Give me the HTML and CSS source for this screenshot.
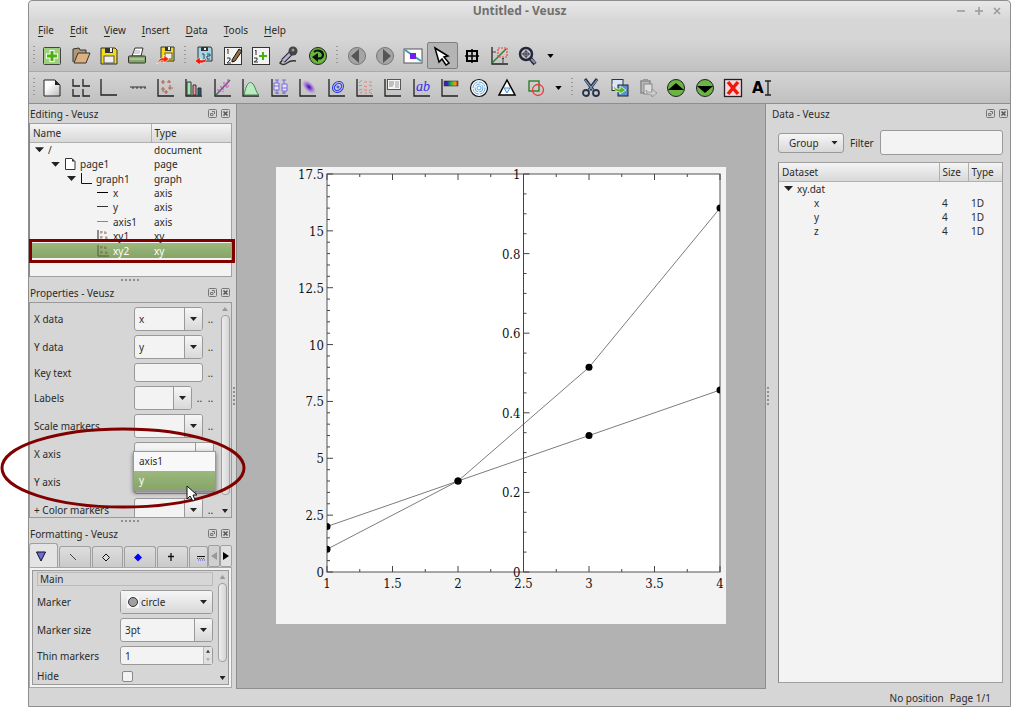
FILE: index.html
```html
<!DOCTYPE html>
<html lang="en">
<head>
  <meta charset="UTF-8" />
  <meta name="viewport" content="width=device-width, initial-scale=1" />
  <title>Untitled - Veusz</title>
  <link rel="stylesheet" href="styles.css">
</head>
<body>
  <div class="window">
    <header class="titlebar">
      <h1>Untitled - Veusz</h1>
      <div class="window-buttons">
        <button aria-label="Minimize"><svg viewBox="0 0 8 8"><path d="M0 4H8"/></svg></button>
        <button aria-label="Maximize"><svg viewBox="0 0 8 8"><path d="M0 4H8M4 0V8"/></svg></button>
        <button aria-label="Close"><svg viewBox="0 0 8 8"><path d="M1 1L7 7M7 1L1 7"/></svg></button>
      </div>
    </header>

    <nav class="menubar">
      <button><u>F</u>ile</button>
      <button><u>E</u>dit</button>
      <button><u>V</u>iew</button>
      <button><u>I</u>nsert</button>
      <button><u>D</u>ata</button>
      <button><u>T</u>ools</button>
      <button><u>H</u>elp</button>
    </nav>

    <!-- File, data and view tools -->
    <div class="toolbar">
      <span class="grip"></span>
      <div class="tools five">
        <button aria-label="New"><svg viewBox="0 0 20 20"><rect x="1.5" y="1.5" width="17" height="17" rx="1" fill="#9fd080" stroke="#444"/><path d="M10 4V16M4 10H16" stroke="#fff" stroke-width="5"/><path d="M10 5V15M5 10H15" stroke="#4caf10" stroke-width="3"/></svg></button>
        <button aria-label="Open"><svg viewBox="0 0 20 20"><path d="M2 16V3L8 2L9 4H15V8" fill="#b09878" stroke="#333"/><path d="M3 17L7 7H19L15 17Z" fill="#deb080" stroke="#333"/></svg></button>
        <button aria-label="Save"><svg viewBox="0 0 20 20"><path d="M2 2H16L18 4V18H2Z" fill="#f2dc1c" stroke="#333"/><rect x="6" y="2" width="8" height="5" fill="#333"/><rect x="11" y="2" width="2" height="4" fill="#eee"/><rect x="5" y="10" width="10" height="7" fill="#eee" stroke="#555"/></svg></button>
        <button aria-label="Print"><svg viewBox="0 0 20 20"><path d="M5 10L8 2H16L14 10Z" fill="#fff" stroke="#333"/><path d="M8 5H13M7 7H13" stroke="#aaa"/><rect x="1.500" y="10" width="17" height="7" rx="1" fill="#86a968" stroke="#333"/><path d="M3 13H17" stroke="#cde0b8"/></svg></button>
        <button aria-label="Export"><svg viewBox="0 0 20 20"><path d="M5 1H18V15H5Z" fill="#f2dc1c" stroke="#333"/><rect x="9" y="1" width="6" height="4" fill="#333"/><rect x="12" y="1" width="2" height="3" fill="#eee"/><rect x="9" y="7" width="7" height="6" fill="#eee" stroke="#555"/><path d="M1 18C2 13 6 11 8 12V9L13 13L8 17V15C5 14 3 15 1 18Z" fill="#f22808" stroke="#fff" stroke-width=".6"/></svg></button>
      </div>
      <span class="grip"></span>
      <div class="tools five">
        <button aria-label="Import data"><svg viewBox="0 0 20 20"><path d="M4 1H17L18 3V15H4Z" fill="#a4d7e6" stroke="#333"/><path d="M7 1V5H14V1" fill="#333"/><path d="M11 2V4" stroke="#eee" stroke-width="2"/><path d="M8 8H10V13M13 8H16V10H13V13H16" fill="none" stroke="#345"/><path d="M1 15L6 11V14C9 14 11 14 12 12C13 16 10 17 6 17V19Z" fill="#f01808" stroke="#fff" stroke-width=".5"/></svg></button>
        <button aria-label="Edit data"><svg viewBox="0 0 20 20"><rect x="1.500" y="1.500" width="17" height="17" fill="#f3f3f3" stroke="#333"/><path d="M4 4L5 3V8M4 12H7V14L4 17H8" fill="none" stroke="#333"/><path d="M9 14L16 3L19 5L12 15L9 16Z" fill="#987040" stroke="#111"/></svg></button>
        <button aria-label="Create data"><svg viewBox="0 0 20 20"><rect x="1.500" y="1.500" width="17" height="17" fill="#f3f3f3" stroke="#333"/><path d="M4 5L5 4V9M3 12H6V14L3 16H7" fill="none" stroke="#333"/><path d="M12 6V14M8 10H16" stroke="#4caf10" stroke-width="2"/></svg></button>
        <button aria-label="Capture data"><svg viewBox="0 0 20 20"><path d="M6 11L1 17Q4 20 8 17T17 15" fill="none" stroke="#333" stroke-width="1.500"/><path d="M4 15L12 7" stroke="#222" stroke-width="5"/><path d="M4 15L12 7" stroke="#b8b0d8" stroke-width="3"/><circle cx="14" cy="5" r="4.500" fill="#444"/><circle cx="14" cy="4" r="1.500" fill="#999"/></svg></button>
        <button aria-label="Reload"><svg viewBox="0 0 20 20"><circle cx="10" cy="10" r="8.500" fill="#68b83c" stroke="#222"/><path d="M6 6C9 3 15 5 15 9C15 12 12 13 10 12" fill="none" stroke="#111" stroke-width="2.200"/><path d="M4 11L10 7V16Z" fill="#111"/></svg></button>
      </div>
      <span class="grip"></span>
      <div class="tools seven-view">
        <button aria-label="Previous page"><svg viewBox="0 0 20 20"><circle cx="10" cy="10" r="8.500" fill="#a5a5a5" stroke="#777"/><path d="M4 10L12 3V17Z" fill="#555"/></svg></button>
        <button aria-label="Next page"><svg viewBox="0 0 20 20"><circle cx="10" cy="10" r="8.500" fill="#a5a5a5" stroke="#777"/><path d="M16 10L8 3V17Z" fill="#555"/></svg></button>
        <button aria-label="Full screen"><svg viewBox="0 0 20 20"><rect x="1" y="3" width="18" height="14" fill="#fff" stroke="#555"/><path d="M2 4L18 15" stroke="#389cb8" stroke-width="2"/><rect x="7" y="7" width="6" height="6" fill="#7020e8"/></svg></button>
        <button class="pressed" aria-label="Select"><svg viewBox="0 0 20 20"><path d="M3 2L16 10L12 11L17 17L14 19L10 13L7 16Z" fill="#fff" stroke="#000" stroke-width="1.500"/></svg></button>
        <button aria-label="Read data"><svg viewBox="0 0 20 20"><rect x="5" y="5" width="10" height="10" fill="#ccc" stroke="#000" stroke-width="2"/><path d="M10 3V17M3 10H17" stroke="#000" stroke-width="1.500"/></svg></button>
        <button aria-label="Zoom graph"><svg viewBox="0 0 20 20"><path class="axes" d="M2 1V18H18"/><path d="M2 17L16 3" stroke="#28803c" stroke-width="1.500"/><path d="M8 2H17V11H8Z" fill="none" stroke="#f04830" stroke-width="1.200" stroke-dasharray="2 1"/><path d="M2 6H6M13 12V17M12 13L13 12L14 13" fill="none" stroke="#444"/></svg></button>
        <button aria-label="Zoom"><svg viewBox="0 0 20 20"><path d="M12 12L17 18" stroke="#222" stroke-width="4"/><path d="M13 13L17 17" stroke="#8890c8" stroke-width="2"/><circle cx="8" cy="8" r="6" fill="#ccc" stroke="#26263c" stroke-width="2.500"/><path d="M8 4V12M4 8H12" stroke="#333"/><circle cx="8" cy="8" r="2.500" fill="none" stroke="#446"/></svg></button>
      </div>
      <button class="more" aria-label="More zoom options"><svg viewBox="0 0 8 5"><path d="M0 0H8L4 5Z"/></svg></button>
    </div>

    <!-- Widget and edit tools -->
    <div class="toolbar">
      <span class="grip"></span>
      <div class="tools insert">
        <button aria-label="Page"><svg viewBox="0 0 20 20"><defs><linearGradient id="paper" x2="1" y2="1"><stop offset=".3" stop-color="#fff"/><stop offset="1" stop-color="#bbb"/></linearGradient></defs><path d="M2 2H13L18 7V18H2Z" fill="url(#paper)" stroke="#222"/><path d="M13 2V7H18Z" fill="#222"/></svg></button>
        <button aria-label="Grid"><svg viewBox="0 0 20 20"><path class="axes" d="M2 1V8H9M12 1V8H19M2 11V18H9M12 11V18H19"/></svg></button>
        <button aria-label="Graph"><svg viewBox="0 0 20 20"><path class="axes" d="M2 1V17H18"/></svg></button>
        <button aria-label="Axis"><svg viewBox="0 0 20 20"><path d="M2 9H18M5 9V11M9 9V11M13 9V11M17 9V11" stroke="#333"/></svg></button>
        <button aria-label="XY"><svg viewBox="0 0 20 20"><path class="axes" d="M2 1V18H18"/><path d="M7 2V6M5 4H9M13 2V5M11 4H15M7 9V14M5 11H9M14 7V12M12 10H17M10 12V16M8 14H12" stroke="#b06a50" stroke-width="1.200"/></svg></button>
        <button aria-label="Bar"><svg viewBox="0 0 20 20"><path class="axes" d="M2 1V18H18"/><path d="M3 4H7V17H3Z" fill="#a4e8b0" stroke="#333"/><path d="M9 7H12V17H9Z" fill="#f09898" stroke="#333"/><path d="M14 10H17V17H14Z" fill="#106080" stroke="#333"/></svg></button>
        <button aria-label="Fit"><svg viewBox="0 0 20 20"><path class="axes" d="M2 1V18H18"/><path d="M3 17L17 2" stroke="#308040" stroke-width="1.500"/><path d="M5 11V15M8 8V12M11 4V9M14 5V10M10 10V14M15 1V5M6 13H9M12 8H16" stroke="#e030e0" stroke-dasharray="2 1"/></svg></button>
        <button aria-label="Function"><svg viewBox="0 0 20 20"><path class="axes" d="M2 1V18H18"/><path d="M3 17C6 3 9 4 11 5C14 7 15 15 18 17Z" fill="#b8ecc0" stroke="#508058"/></svg></button>
        <button aria-label="Box plot"><svg viewBox="0 0 20 20"><path class="axes" d="M2 1V18H18"/><path d="M7 2V16M14 2V16M5 2H9M12 2H16M5 15H9M12 15H16" stroke="#7868d8"/><path d="M4 5H9V12H4ZM12 6H17V13H12ZM4 8H9M12 10H17" fill="#e8e4ff" stroke="#7868d8"/></svg></button>
        <button aria-label="Image"><svg viewBox="0 0 20 20"><defs><radialGradient id="spot"><stop offset=".1" stop-color="#5018c0"/><stop offset=".6" stop-color="#a070d8" stop-opacity=".7"/><stop offset="1" stop-color="#c8a0e0" stop-opacity="0"/></radialGradient></defs><path class="axes" d="M2 1V18H18"/><ellipse cx="11" cy="9" rx="9" ry="5" transform="rotate(45 11 9)" fill="url(#spot)"/></svg></button>
        <button aria-label="Contour"><svg viewBox="0 0 20 20"><path class="axes" d="M2 1V18H18"/><g fill="none" stroke="#2838f0"><ellipse cx="11" cy="9" rx="6" ry="5" transform="rotate(-45 11 9)"/><ellipse cx="11" cy="9" rx="4" ry="3" transform="rotate(-45 11 9)"/><circle cx="11" cy="9" r="1"/></g></svg></button>
        <button aria-label="Vector field"><svg viewBox="0 0 20 20"><path class="axes" d="M2 1V18H18"/><path d="M4 5L7 2M9 4H12M14 4H17M4 8L7 7M9 8L12 9M14 7L17 8M4 12L7 11M9 12H12M14 13L17 11M5 15L7 14M10 15H12M14 14L17 16" stroke="#e88070"/></svg></button>
        <button aria-label="Key"><svg viewBox="0 0 20 20"><path class="axes" d="M2 1V18H18"/><rect x="4.500" y="1.500" width="13" height="10" fill="#f4f4f4" stroke="#555"/><path d="M6 4H11M6 6H11M6 8H10" stroke="#888"/><path d="M13 3V10M15 3V10" stroke="#99a"/></svg></button>
        <button aria-label="Label"><svg viewBox="0 0 20 20"><path class="axes" d="M2 1V18H18"/><text class="ab" x="4" y="13">ab</text></svg></button>
        <button aria-label="Color bar"><svg viewBox="0 0 20 20"><defs><linearGradient id="rainbow"><stop offset="0" stop-color="#802080"/><stop offset=".2" stop-color="#2020d0"/><stop offset=".5" stop-color="#18c030"/><stop offset=".8" stop-color="#f0a010"/><stop offset="1" stop-color="#e01010"/></linearGradient></defs><path class="axes" d="M2 1V18H18"/><rect x="4" y="3" width="14" height="5" fill="url(#rainbow)" stroke="#222" stroke-width=".5"/></svg></button>
        <button aria-label="Polar"><svg viewBox="0 0 20 20"><circle cx="10" cy="10" r="8.500" fill="#fff" stroke="#111" stroke-width="1.200"/><g fill="none" stroke="#58a8e8"><circle cx="10" cy="10" r="6" stroke-dasharray="8 1"/><circle cx="10" cy="10" r="4" stroke-dasharray="6 1"/><circle cx="10" cy="10" r="2"/></g></svg></button>
        <button aria-label="Ternary"><svg viewBox="0 0 20 20"><path d="M10 2L18 17H2Z" fill="#fff" stroke="#000" stroke-width="1.500"/><path d="M7 10L13 10L10 15Z" fill="#e0f0ff" stroke="#4890e0"/></svg></button>
        <button aria-label="Shape"><svg viewBox="0 0 20 20"><rect x="3" y="3" width="10" height="10" fill="none" stroke="#207820" stroke-width="1.300"/><circle cx="12" cy="12" r="5.500" fill="none" stroke="#f03838" stroke-width="1.300"/></svg></button>
      </div>
      <button class="more" aria-label="More shapes"><svg viewBox="0 0 8 5"><path d="M0 0H8L4 5Z"/></svg></button>
      <span class="grip"></span>
      <div class="tools seven">
        <button aria-label="Cut"><svg viewBox="0 0 20 20"><path d="M4 1L12 12M16 1L8 12" stroke="#26324c" stroke-width="3"/><path d="M4 2L12 12M16 2L8 12" stroke="#8ca0c0" stroke-width="1.200"/><g fill="none" stroke="#26324c" stroke-width="1.800"><ellipse cx="5" cy="15" rx="3" ry="3"/><ellipse cx="15" cy="15" rx="3" ry="3"/></g></svg></button>
        <button aria-label="Copy"><svg viewBox="0 0 20 20"><rect x="2" y="1.500" width="11" height="11" fill="#d8e4f8" stroke="#333"/><rect x="8" y="7" width="10" height="11" fill="#5890d8" stroke="#223"/><path d="M3 6C4 10 7 11 10 11V8L16 12L10 16V14C5 14 3 10 3 6Z" fill="#58b818" stroke="#fff" stroke-width=".7"/></svg></button>
        <button aria-label="Paste" disabled><svg viewBox="0 0 20 20"><path d="M3 3H12V15H3Z" fill="#bbb" stroke="#888" stroke-width="1.500"/><path d="M5 1H10V4H5Z" fill="#999"/><rect x="6" y="6" width="8" height="10" fill="#ddd" stroke="#888"/><path d="M8 12C10 15 12 14 14 14V11L19 15L14 19V17C10 17 8 15 8 12Z" fill="#ccc" stroke="#888" stroke-width=".7"/></svg></button>
        <button aria-label="Move up"><svg viewBox="0 0 20 20"><circle cx="10" cy="10" r="8.500" fill="#6cb444" stroke="#222"/><path d="M2 12L10 5L18 12Z" fill="#000"/></svg></button>
        <button aria-label="Move down"><svg viewBox="0 0 20 20"><circle cx="10" cy="10" r="8.500" fill="#6cb444" stroke="#222"/><path d="M2 8L10 15L18 8Z" fill="#000"/></svg></button>
        <button aria-label="Delete"><svg viewBox="0 0 20 20"><rect x="1.500" y="1.500" width="17" height="17" fill="#f6d8dc" stroke="#222" stroke-width="1.300"/><path d="M5 4L15 16M15 4L5 16" stroke="#f01808" stroke-width="3.500"/></svg></button>
        <button aria-label="Rename"><svg viewBox="0 0 20 20"><text class="rename" x="0" y="15">A</text><path d="M13 3H19M16 3V17M13 17H19" stroke="#222" stroke-width="1.300"/></svg></button>
      </div>
    </div>

    <main class="workspace">
      <aside class="left">
        <section class="dock tree-dock">
          <div class="dock-title">
            <h2>Editing - Veusz</h2>
            <button aria-label="Float"><svg viewBox="0 0 9 9"><rect x=".5" y=".5" width="8" height="8" rx="1"/><path d="M4 2.500H6.500V5M2.500 4.500H5V6.500H2.500Z"/></svg></button>
            <button aria-label="Close"><svg viewBox="0 0 9 9"><rect x=".5" y=".5" width="8" height="8" rx="1"/><path class="cross" d="M2.500 2.500L6.500 6.500M6.500 2.500L2.500 6.500"/></svg></button>
          </div>
          <div class="list tree">
            <table>
              <thead>
                <tr><th class="name">Name</th><th>Type</th></tr>
              </thead>
              <tbody>
                <tr><td><span class="node"><i class="open"></i>/</span></td><td>document</td></tr>
                <tr><td><span class="node level1"><i class="open"></i><svg viewBox="0 0 12 12"><path d="M1.500.5H8L11 3.500V11.500H1.500Z" fill="#fff" stroke="#333"/><path d="M8 .5V3.500H11Z" fill="#333"/></svg>page1</span></td><td>page</td></tr>
                <tr><td><span class="node level2"><i class="open"></i><svg viewBox="0 0 12 12"><path d="M1.500 0V10.500H12" fill="none" stroke="#111"/></svg>graph1</span></td><td>graph</td></tr>
                <tr><td><span class="node level3"><svg viewBox="0 0 12 12"><path d="M0 5.500H11" stroke="#000"/></svg>x</span></td><td>axis</td></tr>
                <tr><td><span class="node level3"><svg viewBox="0 0 12 12"><path d="M0 5.500H11" stroke="#333"/></svg>y</span></td><td>axis</td></tr>
                <tr><td><span class="node level3"><svg viewBox="0 0 12 12"><path d="M0 5.500H11" stroke="#888"/></svg>axis1</span></td><td>axis</td></tr>
                <tr><td><span class="node level3"><svg viewBox="0 0 12 12"><path d="M1 0V11H12" fill="none" stroke="#222"/><path d="M4 1V4M3 2H6M8 1V4M7 3H10M4 6V9M3 7H6M9 6V9M8 8H11" stroke="#987060" stroke-width=".8"/></svg>xy1</span></td><td>xy</td></tr>
                <tr class="selected"><td><span class="node level3"><svg viewBox="0 0 12 12"><path d="M1 0V11H12" fill="none" stroke="#4c5c3c"/><path d="M4 1V4M3 2H6M8 1V4M7 3H10M4 6V9M3 7H6M9 6V9M8 8H11" stroke="#806850" stroke-width=".8"/></svg>xy2</span></td><td>xy</td></tr>
              </tbody>
            </table>
          </div>
          <div class="highlight-box"></div>
        </section>

        <div class="splitter"></div>

        <section class="dock props-dock">
          <div class="dock-title">
            <h2>Properties - Veusz</h2>
            <button aria-label="Float"><svg viewBox="0 0 9 9"><rect x=".5" y=".5" width="8" height="8" rx="1"/><path d="M4 2.500H6.500V5M2.500 4.500H5V6.500H2.500Z"/></svg></button>
            <button aria-label="Close"><svg viewBox="0 0 9 9"><rect x=".5" y=".5" width="8" height="8" rx="1"/><path class="cross" d="M2.500 2.500L6.500 6.500M6.500 2.500L2.500 6.500"/></svg></button>
          </div>
          <div class="scroll-area props">
            <form class="fields">
              <div class="field"><label for="xdata">X data</label><span class="combo"><select id="xdata"><option>x</option></select></span><button type="button" class="dots">..</button></div>
              <div class="field"><label for="ydata">Y data</label><span class="combo"><select id="ydata"><option>y</option></select></span><button type="button" class="dots">..</button></div>
              <div class="field"><label for="key">Key text</label><input type="text" id="key"><button type="button" class="dots">..</button></div>
              <div class="field"><label for="labels">Labels</label><span class="combo"><select id="labels"><option></option></select></span><button type="button" class="dots">..</button><button type="button" class="dots">..</button></div>
              <div class="field"><label for="scale">Scale markers</label><span class="combo"><select id="scale"><option></option></select></span><button type="button" class="dots">..</button></div>
              <div class="field"><label for="xaxis">X axis</label><span class="combo"><select id="xaxis"><option></option></select></span></div>
              <div class="field"><label for="yaxis">Y axis</label><span class="combo"><select id="yaxis"><option></option></select></span></div>
              <div class="field"><label for="color">+ Color markers</label><span class="combo"><select id="color"><option></option></select></span><button type="button" class="dots">..</button></div>
            </form>
            <div class="scrollbar"><i class="up"></i><b></b><i class="down"></i></div>
          </div>
          <ul class="popup">
            <li>axis1</li>
            <li class="selected">y</li>
          </ul>
          <svg class="highlight-oval" viewBox="0 0 248 84"><ellipse cx="124" cy="42" rx="121" ry="39"/></svg>
          <svg class="pointer" viewBox="0 0 12 18"><path d="M1 1V14L4 11L7 16L9 15L7 10H11Z" fill="#fff" stroke="#111"/></svg>
        </section>

        <div class="splitter"></div>

        <section class="dock">
          <div class="dock-title">
            <h2>Formatting - Veusz</h2>
            <button aria-label="Float"><svg viewBox="0 0 9 9"><rect x=".5" y=".5" width="8" height="8" rx="1"/><path d="M4 2.500H6.500V5M2.500 4.500H5V6.500H2.500Z"/></svg></button>
            <button aria-label="Close"><svg viewBox="0 0 9 9"><rect x=".5" y=".5" width="8" height="8" rx="1"/><path class="cross" d="M2.500 2.500L6.500 6.500M6.500 2.500L2.500 6.500"/></svg></button>
          </div>
          <div class="tabs">
            <button class="tab active" aria-label="Main"><svg viewBox="0 0 12 12"><path d="M1.500 2H10.500L6 11Z" fill="#6c6ce0" stroke="#111"/></svg></button>
            <button class="tab" aria-label="Plot line"><svg viewBox="0 0 12 12"><path d="M3 3L9 9" stroke="#444"/></svg></button>
            <button class="tab" aria-label="Marker border"><svg viewBox="0 0 12 12"><path d="M6 3L9.500 6.500L6 10L2.500 6.500Z" fill="#ddd" stroke="#111"/></svg></button>
            <button class="tab" aria-label="Marker fill"><svg viewBox="0 0 12 12"><path d="M6 2.500L10 6.500L6 10.500L2 6.500Z" fill="#0000ff"/></svg></button>
            <button class="tab" aria-label="Error bar line"><svg viewBox="0 0 12 12"><path d="M6 2V10M3 5.500H9" stroke="#111" stroke-width="1.300"/></svg></button>
            <button class="tab" aria-label="Fill below"><svg viewBox="0 0 12 12"><path d="M2 5.500H10" stroke="#111"/><path d="M2 7.500H10M3 9H10" stroke="#4444e0" stroke-dasharray="1 1"/></svg></button>
            <button class="tab-scroll" aria-label="Scroll left" disabled><svg viewBox="0 0 6 8"><path d="M6 0V8L0 4Z"/></svg></button>
            <button class="tab-scroll" aria-label="Scroll right"><svg viewBox="0 0 6 8"><path d="M0 0V8L6 4Z"/></svg></button>
          </div>
          <div class="tab-page">
            <div class="scroll-area">
              <form class="fields formatting">
                <h3>Main</h3>
                <div class="field"><label for="marker">Marker</label><span class="combo picker"><svg viewBox="0 0 12 12"><rect width="12" height="12" fill="#f8f8f8"/><circle cx="6" cy="6" r="4.500" fill="#a0a0a0" stroke="#333"/></svg><select id="marker"><option>circle</option></select></span></div>
                <div class="field"><label for="size">Marker size</label><span class="combo"><select id="size"><option>3pt</option></select></span></div>
                <div class="field"><label for="thin">Thin markers</label><span class="spin"><input type="text" id="thin" value="1"><span class="steps"><i class="up"></i><i class="down off"></i></span></span></div>
                <div class="field"><label for="hide">Hide</label><input type="checkbox" id="hide"></div>
              </form>
              <div class="scrollbar"><i class="up"></i><b></b><i class="down"></i></div>
            </div>
          </div>
        </section>
      </aside>

      <div class="handle"></div>

      <div class="canvas">
        <svg class="plot" id="plot" viewBox="0 0 450 457"></svg>
      </div>

      <div class="handle"></div>

      <aside class="right">
        <section class="dock data-dock">
          <div class="dock-title">
            <h2>Data - Veusz</h2>
            <button aria-label="Float"><svg viewBox="0 0 9 9"><rect x=".5" y=".5" width="8" height="8" rx="1"/><path d="M4 2.500H6.500V5M2.500 4.500H5V6.500H2.500Z"/></svg></button>
            <button aria-label="Close"><svg viewBox="0 0 9 9"><rect x=".5" y=".5" width="8" height="8" rx="1"/><path class="cross" d="M2.500 2.500L6.500 6.500M6.500 2.500L2.500 6.500"/></svg></button>
          </div>
          <div class="filter">
            <button class="group">Group<i class="open"></i></button>
            <label for="filter">Filter</label>
            <input type="text" id="filter">
          </div>
          <div class="list datasets">
            <table>
              <thead>
                <tr><th>Dataset</th><th class="size">Size</th><th class="type">Type</th></tr>
              </thead>
              <tbody>
                <tr><td><span class="node"><i class="open"></i>xy.dat</span></td><td></td><td></td></tr>
                <tr><td><span class="node item">x</span></td><td>4</td><td>1D</td></tr>
                <tr><td><span class="node item">y</span></td><td>4</td><td>1D</td></tr>
                <tr><td><span class="node item">z</span></td><td>4</td><td>1D</td></tr>
              </tbody>
            </table>
          </div>
        </section>
      </aside>
    </main>

    <footer class="statusbar">
      <span>No position</span>
      <span>Page 1/1</span>
    </footer>
  </div>

  <script>
    const plot = document.getElementById('plot');

    // Plot area inside the page
    const left = 51, right = 444, top_ = 7, bottom = 405;

    const xpos = v => left + (v - 1) / 3 * (right - left);
    const ypos = v => bottom - v / 17.5 * (bottom - top_);
    const y2pos = v => bottom - v * (bottom - top_);

    let out = '<clipPath id="area"><rect x="51" y="7" width="393" height="398"/></clipPath>';
    out += '<rect class="area" x="51" y="7" width="393" height="398"/>';

    function line(x1, y1, x2, y2) {
      out += `<line x1="${x1}" y1="${y1}" x2="${x2}" y2="${y2}"/>`;
    }

    function text(x, y, anchor, value) {
      out += `<text x="${x}" y="${y}" text-anchor="${anchor}">${value}</text>`;
    }

    // x axis, mirrored along the top
    for (let i = 0; i <= 12; i++) {
      const x = xpos(1 + i / 4);
      const len = i % 2 ? 3 : 6;
      line(x, bottom, x, bottom - len);
      line(x, top_, x, top_ + len);
      if (i % 2 === 0) text(x, 421, 'middle', 1 + i / 4);
    }

    // y axis
    for (let i = 0; i <= 35; i++) {
      const y = ypos(i / 2);
      line(left, y, left + (i % 5 ? 3 : 6), y);
      if (i % 5 === 0) text(left - 3, y + 5, 'end', i / 2);
    }

    // axis1, in the middle of the graph
    const mid = xpos(2.5);
    line(mid, top_, mid, bottom);
    for (let i = 0; i <= 20; i++) {
      const y = y2pos(i / 20);
      line(mid, y, mid + (i % 4 ? 3 : 6), y);
      if (i % 4 === 0) text(mid - 3, y + 5, 'end', i / 20);
    }

    // data
    const series = [[2, 4, 6, 8], [1, 4, 9, 16]];
    out += '<g clip-path="url(#area)">';
    for (const values of series) {
      const pts = values.map((v, i) => [xpos(i + 1), ypos(v)]);
      out += `<polyline points="${pts.join(' ')}"/>`;
      for (const [x, y] of pts) out += `<circle cx="${x}" cy="${y}" r="3.5"/>`;
    }
    out += '</g>';

    plot.innerHTML = out;
  </script>
</body>
</html>
```
FILE: styles.css
```css
* {
  box-sizing: border-box;
}

body {
  margin: 0;
  padding-left: 28px;
  background: #fff;
  font-family: "Noto Sans", "DejaVu Sans", sans-serif;
  font-size: 10px;
  line-height: 14px;
  color: #2a2a2a;
}

button,
input,
select {
  font: inherit;
  color: inherit;
  margin: 0;
}

button {
  padding: 0;
  border: none;
  background: none;
}

h1, h2, h3 {
  margin: 0;
  font-size: 10px;
  font-weight: normal;
}

svg {
  display: block;
}

.window {
  display: flex;
  flex-direction: column;
  min-height: 100vh;
  border: 1px solid #8e8e8e;
  border-radius: 4px 4px 0 0;
  background: linear-gradient(#e8e8e8, #d6d6d6 20px, #d6d6d6 38px, #c0c0c0 71px, #d6d6d6 71px);
}

/* Title and menu */
.titlebar {
  display: grid;
  grid-template-columns: 1fr auto 1fr;
  align-items: center;
  height: 20px;
}

.titlebar h1 {
  grid-column: 2;
  font-size: 12px;
  font-weight: bold;
  color: #707070;
}

.window-buttons {
  display: flex;
  justify-content: flex-end;
  gap: 10px;
  padding-right: 9px;
}

.window-buttons svg {
  width: 8px;
  height: 8px;
  stroke: #999;
  stroke-width: 1.5;
}

.menubar {
  display: flex;
  gap: 16px;
  height: 18px;
  padding-left: 9px;
}

.menubar u {
  text-underline-offset: 2px;
}

/* Toolbars */
.toolbar {
  display: flex;
  align-items: center;
  height: 33px;
  padding-top: 1px;
  border-bottom: 1px solid #aaa;
}

.toolbar + .toolbar {
  height: 32px;
  padding-top: 0;
  border-bottom-color: #8e8e8e;
  background: linear-gradient(#d4d4d4, #c0c0c0);
}

.grip {
  width: 10px;
  height: 20px;
  background: repeating-linear-gradient(#999 0 1px, transparent 1px 4px) center / 2px 20px no-repeat;
}

.grip:first-child {
  width: 9px;
}

.tools {
  display: flex;
}

.tools button {
  flex: 1;
  display: flex;
  justify-content: center;
  align-items: center;
  height: 27px;
}

.tools svg {
  width: 20px;
  height: 20px;
}

.five {
  width: 142px;
}

.seven,
.seven-view {
  width: 199px;
}

.seven-view {
  margin-left: 1px;
}

.insert {
  width: 512px;
}

.tools .pressed {
  border: 1px solid #808080;
  border-radius: 2px;
  background: #b4b4b4;
}

.axes {
  fill: none;
  stroke: #222;
  stroke-width: 1.3;
}

.ab {
  font: italic 14px "Liberation Serif", serif;
  fill: #3030f0;
}

.rename {
  font: bold 15px "DejaVu Sans", sans-serif;
  fill: #000;
}

.more {
  display: flex;
  justify-content: center;
  width: 17px;
}

.more svg {
  width: 7px;
  height: 4px;
}

/* Main area */
.workspace {
  flex: 1;
  display: flex;
}

.left {
  display: flex;
  flex-direction: column;
  width: 203px;
  padding-bottom: 1px;
}

.right {
  display: flex;
  width: 240px;
}

.handle {
  display: flex;
  align-items: center;
  justify-content: center;
  width: 4px;
}

.handle::before {
  content: "";
  width: 2px;
  height: 20px;
  background: repeating-linear-gradient(#909090 0 2px, transparent 2px 4px);
}

.splitter {
  height: 6px;
  background: repeating-linear-gradient(90deg, #909090 0 2px, transparent 2px 4px) center / 20px 2px no-repeat;
}

.canvas {
  flex: 1;
  display: flex;
  align-items: center;
  justify-content: center;
  padding: 0 1px 2px 0;
  border: 1px solid #8e8e8e;
  border-top: none;
  background: #b2b2b2;
}

/* Docks */
.dock {
  position: relative;
}

.dock-title {
  display: flex;
  align-items: center;
  gap: 4px;
  height: 19px;
  padding: 0 2px 0 1px;
}

.dock-title h2 {
  flex: 1;
}

.dock-title svg {
  width: 9px;
  height: 9px;
  fill: none;
  stroke: #777;
}

.dock-title .cross {
  stroke: #555;
  stroke-width: 1.5;
}

.list {
  flex: 1;
  border: 1px solid #a0a0a0;
  border-left-color: #888;
  background: #f3f3f3;
}

table {
  width: 100%;
  border-collapse: collapse;
  table-layout: fixed;
}

th {
  height: 18px;
  padding: 0 3px;
  border-right: 1px solid #b0b0b0;
  border-bottom: 1px solid #b0b0b0;
  background: linear-gradient(#f4f4f4, #d8d8d8);
  font-weight: normal;
  text-align: left;
}

th:last-child {
  border-right: none;
}

td {
  padding: 0 3px;
}

.tree-dock {
  flex: 1;
  display: flex;
  flex-direction: column;
  z-index: 1;
}

.tree table {
  height: 134px;
}

.tree .name {
  width: 121px;
}

.node {
  display: flex;
  align-items: center;
  gap: 4px;
  padding-left: 2px;
}

.node svg {
  width: 12px;
  height: 12px;
}

.level1 {
  padding-left: 18px;
}

.level2 {
  padding-left: 34px;
}

.level3 {
  padding-left: 64px;
}

.open {
  width: 9px;
  height: 5px;
  background: #222;
  clip-path: polygon(0 0, 100% 0, 50% 100%);
}

.selected {
  background: linear-gradient(#9cb87e, #86a566);
  color: #fff;
}

.highlight-box {
  position: absolute;
  top: 135px;
  left: 0;
  width: 206px;
  height: 24px;
  border: 3px solid #800000;
}

/* Scroll areas */
.scroll-area {
  display: flex;
  overflow: hidden;
  border: 1px solid #999;
}

.props {
  height: 216px;
}

.fields {
  flex: 1;
  display: flex;
  flex-direction: column;
  gap: 4px;
  padding: 4px;
}

.scrollbar {
  display: flex;
  flex-direction: column;
  align-items: center;
  justify-content: space-between;
  width: 12px;
  padding: 4px 0;
}

.scrollbar b {
  flex: 1;
  width: 9px;
  margin: 4px 0 14px;
  border: 1px solid #a0a0a0;
  border-radius: 4px;
  background: linear-gradient(90deg, #eee, #d4d4d4);
}

.up,
.down {
  width: 6px;
  height: 4px;
  background: #222;
}

.up {
  background: #999;
  clip-path: polygon(0 100%, 100% 100%, 50% 0);
}

.down {
  clip-path: polygon(0 0, 100% 0, 50% 100%);
}

/* Form fields */
.field {
  flex: none;
  display: flex;
  align-items: center;
  gap: 4px;
  width: 180px;
}

.field label {
  width: 96px;
  white-space: nowrap;
}

input[type="text"] {
  flex: 1;
  width: 0;
  min-width: 0;
  height: 19px;
  padding: 0 4px;
  border: 1px solid #999;
  border-radius: 3px;
  background: #f3f3f3;
}

.combo {
  flex: 1;
  position: relative;
  display: flex;
  align-items: center;
  height: 24px;
  min-width: 0;
  border: 1px solid #999;
  border-radius: 3px;
  background: #f3f3f3;
}

.combo select {
  flex: 1;
  min-width: 0;
  height: 22px;
  padding: 0 18px 0 4px;
  border: none;
  background: none;
  appearance: none;
}

.combo::before {
  content: "";
  position: absolute;
  top: 0;
  right: 0;
  bottom: 0;
  width: 17px;
  border-left: 1px solid #999;
  border-radius: 0 2px 2px 0;
  background: linear-gradient(#f6f6f6, #d8d8d8);
}

.combo::after {
  content: "";
  position: absolute;
  top: 9px;
  right: 5px;
  width: 7px;
  height: 4px;
  background: #222;
  clip-path: polygon(0 0, 100% 0, 50% 100%);
}

.dots {
  width: 7px;
}

.popup {
  position: absolute;
  top: 168px;
  left: 104px;
  width: 83px;
  margin: 0;
  padding: 0;
  list-style: none;
  border: 1px solid #999;
  background: #f8f8f8;
  box-shadow: 0 2px 4px rgba(0, 0, 0, 0.5);
}

.popup li {
  height: 19px;
  padding: 2px 5px;
}

.props-dock {
  z-index: 1;
}

.highlight-oval {
  position: absolute;
  top: 143px;
  left: -30px;
  width: 248px;
  height: 84px;
  fill: none;
  stroke: #800000;
  stroke-width: 3;
  pointer-events: none;
}

.pointer {
  position: absolute;
  top: 202px;
  left: 157px;
  width: 12px;
  height: 18px;
}

/* Formatting tabs */
.tabs {
  display: flex;
  align-items: flex-end;
  height: 24px;
}

.tab {
  flex: 1 1 0;
  display: flex;
  align-items: center;
  height: 21px;
  margin-right: 1px;
  padding-left: 7px;
  border: 1px solid #a0a0a0;
  border-bottom: none;
  border-radius: 3px 3px 0 0;
  background: linear-gradient(#dedede, #cacaca);
}

.tab svg {
  width: 12px;
  height: 12px;
}

.tab.active {
  height: 24px;
  padding-left: 5px;
  background: #e4e4e4;
}

.tab:nth-child(6) {
  flex: 0 0 16px;
  margin: 0;
  padding-left: 5px;
}

.tab-scroll {
  display: flex;
  align-items: center;
  justify-content: center;
  width: 12px;
  height: 22px;
  border: 1px solid #a0a0a0;
  border-radius: 2px;
  background: #e0e0e0;
}

.tab-scroll svg {
  width: 6px;
  height: 8px;
}

.tab-scroll:disabled {
  background: #d0d0d0;
  fill: #999;
}

.tab-page {
  height: 121px;
  padding: 2px;
  border: 1px solid #a8a8a8;
  background: #f3f3f3;
}

.tab-page .scroll-area {
  height: 100%;
  background: #d6d6d6;
}

.formatting {
  padding: 1px 4px;
}

.formatting h3 {
  width: 176px;
  height: 14px;
  padding-left: 2px;
  border: 1px solid #bbb;
  line-height: 12px;
}

.formatting .field {
  width: 176px;
}

.formatting label {
  width: 79px;
}

.picker svg {
  width: 12px;
  height: 12px;
  margin-left: 6px;
  z-index: 1;
}

.picker select {
  z-index: 1;
  padding-left: 2px;
}

.picker.combo::before {
  width: 100%;
  border-left: none;
}

.spin {
  flex: 1;
  display: flex;
  min-width: 0;
  border: 1px solid #999;
  border-radius: 3px;
  background: #f3f3f3;
}

.spin input[type="text"] {
  height: 17px;
  border: none;
}

.steps {
  display: flex;
  flex-direction: column;
  align-items: center;
  justify-content: space-around;
  width: 9px;
  border-left: 1px solid #bbb;
  background: #e0e0e0;
}

.steps i {
  width: 4px;
  height: 3px;
  background: #333;
}

.steps .off {
  background: #aaa;
}

input[type="checkbox"] {
  width: 11px;
  height: 11px;
  margin-left: 2px;
  border: 1px solid #888;
  border-radius: 2px;
  background: #f3f3f3;
  appearance: none;
}

/* Plot */
.plot {
  width: 450px;
  height: 457px;
  background: #f3f3f3;
}

.plot .area {
  fill: #fff;
  stroke: #555;
}

.plot line {
  stroke: #444;
}

.plot polyline {
  fill: none;
  stroke: #444;
  stroke-width: 0.7;
}

.plot text {
  font-family: "DejaVu Serif Condensed", "DejaVu Serif", serif;
  font-size: 13px;
  fill: #111;
}

/* Data dock */
.data-dock {
  flex: 1;
  display: flex;
  flex-direction: column;
  min-width: 0;
  padding: 0 7px 6px 8px;
}

.data-dock .dock-title {
  margin: 0 -7px 0 -8px;
  padding: 0 2px;
}

.filter {
  display: flex;
  align-items: center;
  gap: 6px;
  height: 39px;
}

.filter input[type="text"] {
  height: 25px;
}

.group {
  display: flex;
  align-items: center;
  justify-content: space-between;
  width: 66px;
  height: 20px;
  padding: 0 5px 0 10px;
  border: 1px solid #999;
  border-radius: 3px;
  background: linear-gradient(#f6f6f6, #d8d8d8);
}

.group .open {
  width: 7px;
  height: 4px;
}

.datasets .size {
  width: 29px;
}

.datasets .type {
  width: 34px;
}

.item {
  padding-left: 32px;
}

.statusbar {
  display: flex;
  justify-content: flex-end;
  gap: 6px;
  height: 17px;
  padding: 2px 19px 0;
}
```
